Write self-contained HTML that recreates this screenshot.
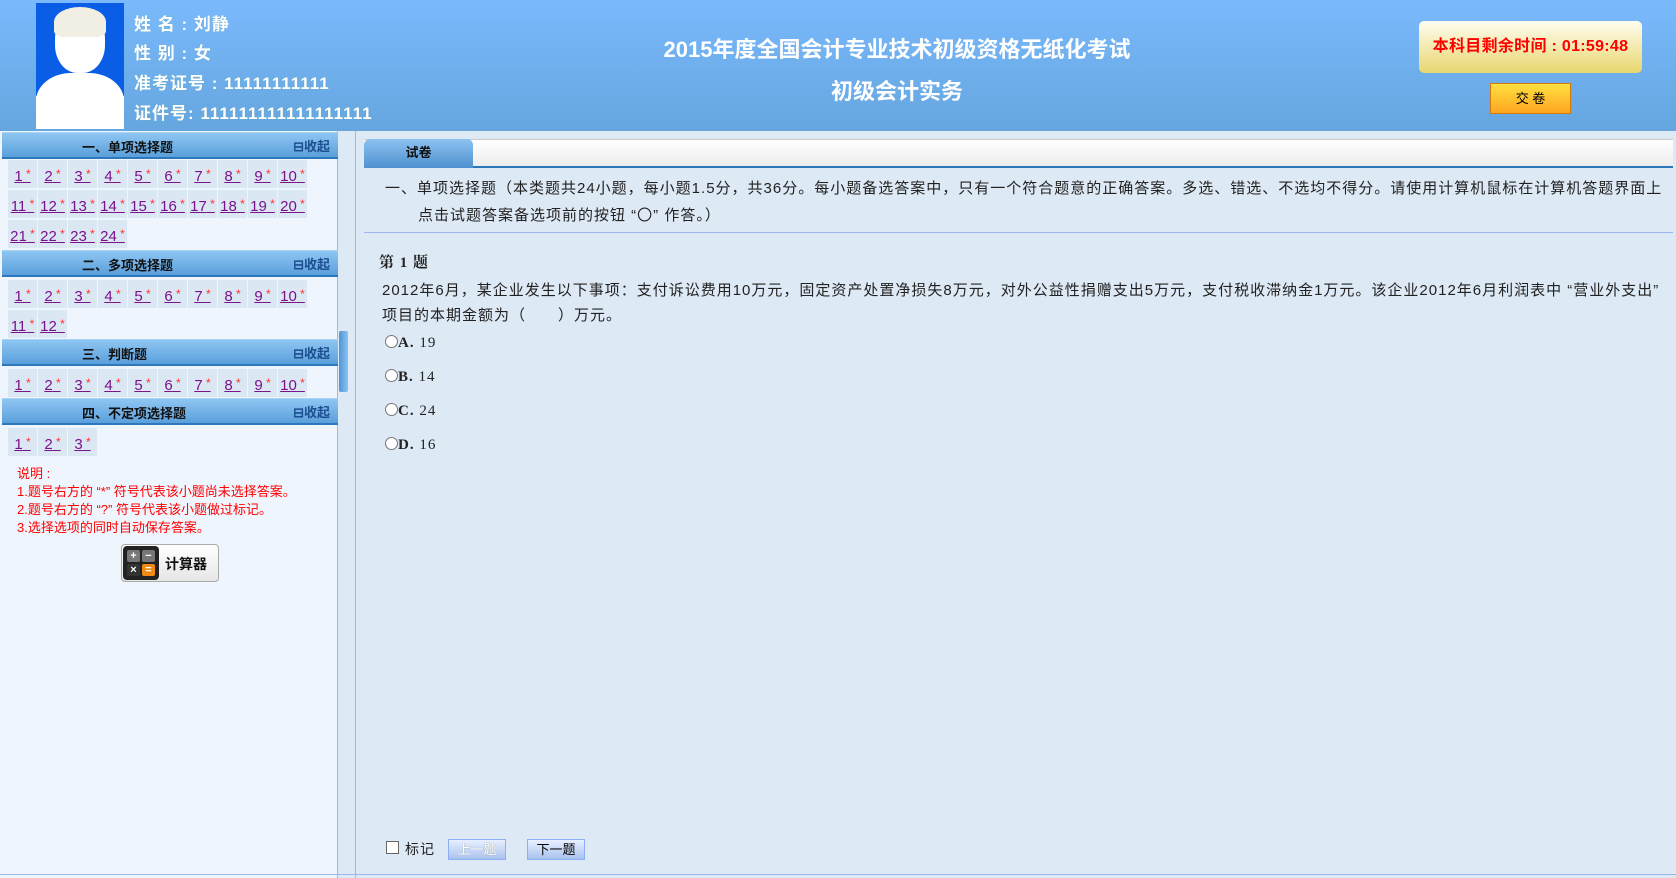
<!DOCTYPE html>
<html><head><meta charset="utf-8">
<style>
*{margin:0;padding:0;box-sizing:border-box}
body{width:1676px;height:878px;overflow:hidden;background:#dde9f5;font-family:"Liberation Sans","Noto Sans CJK SC",sans-serif;position:relative}
.hdr{position:absolute;left:0;top:0;width:1676px;height:131px;background:linear-gradient(#7ab9fc,#65a6df)}
.photo{position:absolute;left:36px;top:3px;width:88px;height:126px;background:#fff;overflow:hidden}
.photo .bg{position:absolute;left:0;top:0;width:88px;height:93px;background:#0a5ee6}
.photo .head{position:absolute;left:19px;top:8px;width:50px;height:62px;border-radius:45% 45% 45% 45%;background:#fff}
.photo .hair{position:absolute;left:18px;top:4px;width:52px;height:30px;border-radius:50% 50% 20% 20%;background:#f1eee4}
.photo .body{position:absolute;left:0;top:70px;width:88px;height:70px;background:#fff;border-radius:40% 40% 0 0}
.info{position:absolute;left:134px;color:#fff;font-weight:bold;font-size:17px;letter-spacing:1px;white-space:nowrap;text-shadow:0 0 1px #6aa}
.title{position:absolute;left:597px;width:600px;text-align:center;color:#fff;font-weight:bold;font-size:22px;white-space:nowrap}
.timer{position:absolute;left:1419px;top:21px;width:223px;height:52px;border-radius:5px;background:linear-gradient(#fffdf0,#e8d76f);color:#f00;font-weight:bold;font-size:16px;letter-spacing:0.3px;text-align:center;line-height:52px}
.submit{position:absolute;left:1490px;top:83px;width:81px;height:31px;border:1px solid #d07a10;background:linear-gradient(#ffe040,#ffa520);font-size:13px;text-align:center;line-height:29px;color:#000}
.side{position:absolute;left:0;top:131px;width:338px;height:747px;background:#eef5fd;border-right:1px solid #9ab7f0}
.sec{position:absolute;left:2px;width:336px;height:27px;background:linear-gradient(#8ec6f3,#5a9fdb);border-top:1px solid #a8d4f8;border-bottom:2px solid #2d78bd;font-weight:bold;font-size:13px;color:#111}
.sec span{position:absolute;left:80px;top:4px}
.sec i{position:absolute;right:8px;top:3px;font-style:normal;color:#1d4f8f;font-size:13px}
.cell{position:absolute;width:29px;height:28px;background:#dbe7f3;font-size:15px;color:#7a128a;text-align:center;line-height:28px;text-decoration:underline}
.cell b{color:#f33;font-weight:normal;font-size:12px;vertical-align:3px}
.note{position:absolute;left:17px;color:#f00;font-size:13px;white-space:nowrap}
.calc{position:absolute;left:121px;top:544px;width:98px;height:38px;border:1px solid #aaa;border-radius:4px;background:linear-gradient(#fff,#e6e6e6)}
.calc .ic{position:absolute;left:1px;top:1px;width:36px;height:34px;border-radius:4px;background:#222}
.calc .k{position:absolute;width:13px;height:12px;border-radius:2px;background:#777;color:#fff;font-size:11px;line-height:12px;text-align:center;font-weight:bold}
.calc .t{position:absolute;left:43px;top:9px;font-size:14px;font-weight:bold;color:#111}
.handle{position:absolute;left:339px;top:331px;width:9px;height:61px;border-radius:2px;background:linear-gradient(90deg,#4f96d8,#8bc2f0)}
.vline{position:absolute;left:355px;top:131px;width:1px;height:747px;background:#9ab7f0}
.tabbar{position:absolute;left:364px;top:139px;width:1309px;height:29px;background:linear-gradient(#fff,#ececec);border-top:1px solid #ccc;border-bottom:2px solid #2c77b9}
.tab{position:absolute;left:364px;top:139px;width:109px;height:29px;border-radius:6px 6px 0 0;background:linear-gradient(#8cc2ef,#4f91d0);font-weight:bold;font-size:13px;color:#111;text-align:center;line-height:28px}
.t15{position:absolute;font-size:15px;color:#222;white-space:nowrap;letter-spacing:1px}
.sep{position:absolute;left:364px;top:232px;width:1309px;height:1px;background:#9ab7f0}
.opt{position:absolute;left:385px;font-size:15px;color:#222;font-family:"Liberation Serif","Noto Serif CJK SC",serif;letter-spacing:1px}
.opt s{display:inline-block;width:13px;height:13px;border:1px solid #777;border-radius:50%;background:#fff;vertical-align:-1px;text-decoration:none}
.btn{position:absolute;top:839px;width:58px;height:21px;border:1px solid #8eaef5;background:linear-gradient(#e8f0ff,#a9c2ee);font-size:13px;text-align:center;line-height:19px}
</style></head><body>
<div class="hdr">
 <div class="photo"><div class="bg"></div><div class="body"></div><div class="head"></div><div class="hair"></div></div>
 <div class="info" style="top:10px">姓 名 : 刘静</div>
 <div class="info" style="top:39px">性 别 : 女</div>
 <div class="info" style="top:69px">准考证号 : 11111111111</div>
 <div class="info" style="top:99px">证件号: 111111111111111111</div>
 <div class="title" style="top:32px">2015年度全国会计专业技术初级资格无纸化考试</div>
 <div class="title" style="top:74px">初级会计实务</div>
 <div class="timer">本科目剩余时间 : 01:59:48</div>
 <div class="submit">交 卷</div>
</div>
<div class="side">
 <div class="sec" style="top:1px"><span>一、单项选择题</span><i>⊟收起</i></div>
 <div class="sec" style="top:119px"><span>二、多项选择题</span><i>⊟收起</i></div>
 <div class="sec" style="top:208px"><span>三、判断题</span><i>⊟收起</i></div>
 <div class="sec" style="top:267px"><span>四、不定项选择题</span><i>⊟收起</i></div>
</div>
<div id="cells"></div>
<div class="note" style="top:463px">说明 :</div>
<div class="note" style="top:481px">1.题号右方的 “*” 符号代表该小题尚未选择答案。</div>
<div class="note" style="top:499px">2.题号右方的 “?” 符号代表该小题做过标记。</div>
<div class="note" style="top:517px">3.选择选项的同时自动保存答案。</div>
<div class="calc"><div class="ic">
 <div class="k" style="left:4px;top:4px">+</div><div class="k" style="left:19px;top:4px">−</div>
 <div class="k" style="left:4px;top:18px;background:#333">×</div><div class="k" style="left:19px;top:18px;background:#f08a10">=</div>
</div><div class="t">计算器</div></div>
<div class="handle"></div>
<div class="vline"></div>
<div class="tabbar"></div>
<div class="tab">试卷</div>
<div class="t15" style="left:385px;top:177px">一、单项选择题（本类题共24小题，每小题1.5分，共36分。每小题备选答案中，只有一个符合题意的正确答案。多选、错选、不选均不得分。请使用计算机鼠标在计算机答题界面上</div>
<div class="t15" style="left:418px;top:204px">点击试题答案备选项前的按钮 “〇” 作答。）</div>
<div class="sep"></div>
<div class="t15" style="left:379px;top:251px;font-weight:bold;font-family:'Liberation Serif','Noto Serif CJK SC',serif">第 1 题</div>
<div class="t15" style="left:382px;top:279px">2012年6月，某企业发生以下事项：支付诉讼费用10万元，固定资产处置净损失8万元，对外公益性捐赠支出5万元，支付税收滞纳金1万元。该企业2012年6月利润表中 “营业外支出”</div>
<div class="t15" style="left:382px;top:304px">项目的本期金额为（　　）万元。</div>
<div class="opt" style="top:335px"><s></s><b>A.</b> 19</div>
<div class="opt" style="top:369px"><s></s><b>B.</b> 14</div>
<div class="opt" style="top:403px"><s></s><b>C.</b> 24</div>
<div class="opt" style="top:437px"><s></s><b>D.</b> 16</div>
<div style="position:absolute;left:386px;top:841px;width:13px;height:13px;border:1px solid #666;background:#fff"></div>
<div class="t15" style="left:405px;top:839px;font-size:14px">标记</div>
<div class="btn" style="left:448px;color:#fff;text-shadow:0 0 1px #888">上一题</div>
<div class="btn" style="left:527px;color:#000">下一题</div>
<div style="position:absolute;left:0;top:874px;width:1676px;height:1px;background:#9ab7f0"></div>
<script>
var rows=[[160,1,10],[190,11,20],[220,21,24],[280,1,10],[310,11,12],[369,1,10],[428,1,3]];
var h='';rows.forEach(function(r){for(var n=r[1];n<=r[2];n++){var i=(n-1)%10;h+='<div class="cell" style="left:'+(8+i*30)+'px;top:'+r[0]+'px">'+n+'<b> *</b></div>';}});
document.getElementById('cells').innerHTML=h;
</script>
</body></html>
